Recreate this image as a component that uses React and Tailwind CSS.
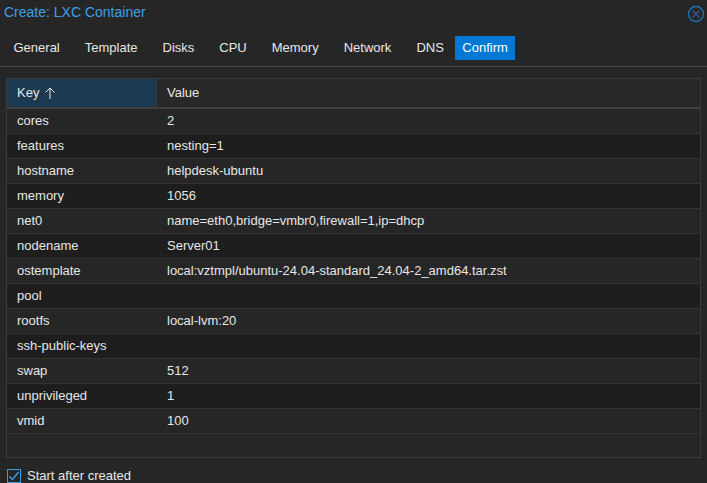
const tabs = ["General", "Template", "Disks", "CPU", "Memory", "Network", "DNS"];
const rows = [
  ["cores", "2"],
  ["features", "nesting=1"],
  ["hostname", "helpdesk-ubuntu"],
  ["memory", "1056"],
  ["net0", "name=eth0,bridge=vmbr0,firewall=1,ip=dhcp"],
  ["nodename", "Server01"],
  ["ostemplate", "local:vztmpl/ubuntu-24.04-standard_24.04-2_amd64.tar.zst"],
  ["pool", ""],
  ["rootfs", "local-lvm:20"],
  ["ssh-public-keys", ""],
  ["swap", "512"],
  ["unprivileged", "1"],
  ["vmid", "100"],
];

export default function App() {
  return (
    <div className="w-[707px] h-[483px] bg-[#262626] text-[13px] text-[#e6e6e6] overflow-hidden" style={{ fontFamily: "'Liberation Sans', Arial, sans-serif" }}>
      <div className="h-[25px] flex items-center justify-between pl-[4px] pr-[2px]">
        <span className="text-[14px] text-[#3d9fe6]">Create: LXC Container</span>
        <svg width="18" height="18" viewBox="0 0 18 18" className="mt-[2px]">
          <circle cx="9" cy="9" r="7.5" fill="none" stroke="#1a73b8" strokeWidth="1.3" />
          <path d="M5.5 5.5 L12.5 12.5 M12.5 5.5 L5.5 12.5" stroke="#3b5a9e" strokeWidth="1.2" />
        </svg>
      </div>
      <div className="h-[42px] flex items-center pl-[1px] pt-[5px] border-b border-[#444]">
        {tabs.map((t) => (
          <span key={t} className="px-[12.5px] leading-[24px]">{t}</span>
        ))}
        <span className="px-[7px] leading-[24px] bg-[#0078d4] text-white ml-[-1px]">Confirm</span>
      </div>
      <div className="mx-[6px] mt-[11px] border border-[#3a3a3a] h-[380px] bg-[#262626]">
        <div className="flex h-[30px] border-b-2 border-[#3f3f3f]">
          <div className="w-[150px] bg-[#1b3a52] flex items-center pl-[10px] border-r border-[#3a3a3a]">
            Key
            <svg width="12" height="14" viewBox="0 0 12 14" className="ml-[5px]">
              <path d="M6 13 V2 M1.5 6.5 L6 2 L10.5 6.5" fill="none" stroke="#e6e6e6" strokeWidth="1" />
            </svg>
          </div>
          <div className="flex-1 flex items-center pl-[10px] bg-[#282828]">Value</div>
        </div>
        {rows.map(([k, v], i) => (
          <div key={k} className={`flex h-[25px] items-center border-b border-[#333] ${i % 2 ? "bg-[#1e1e1e]" : "bg-[#262626]"}`}>
            <div className="w-[150px] pl-[10px]">{k}</div>
            <div className="pl-[10px]">{v}</div>
          </div>
        ))}
      </div>
      <div className="flex items-center gap-[6px] mt-[8px] pl-[7px]">
        <div className="w-[14px] h-[14px] border border-[#3d9fe6] flex items-center justify-center">
          <svg width="12" height="12" viewBox="0 0 12 12"><path d="M1.5 6.5 L4.5 9.5 L10.5 2" fill="none" stroke="#3d9fe6" strokeWidth="1.5" /></svg>
        </div>
        <span>Start after created</span>
      </div>
    </div>
  );
}
